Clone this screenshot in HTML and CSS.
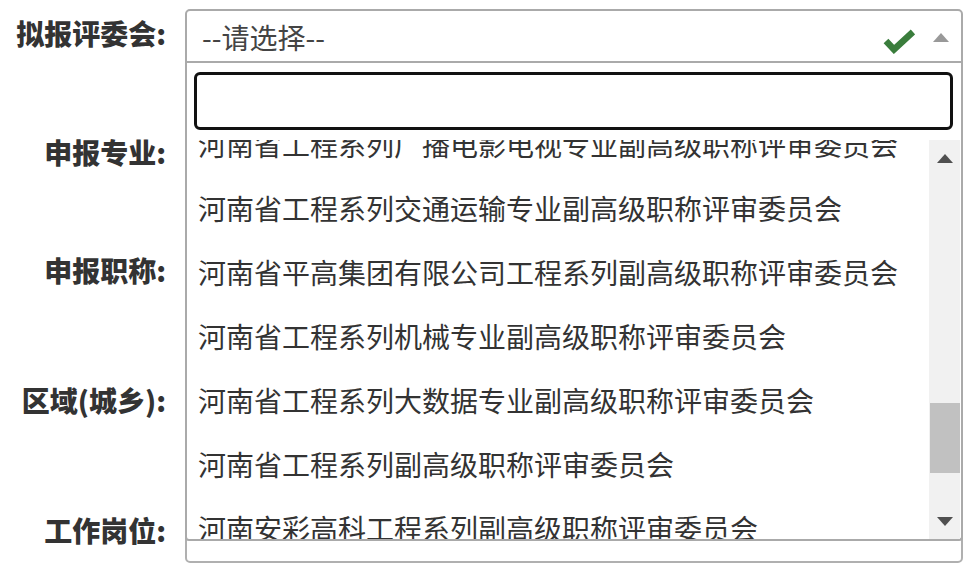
FILE: index.html
```html
<!DOCTYPE html>
<html lang="zh-CN">
<head>
<meta charset="utf-8">
<title>申报</title>
<link rel="stylesheet" href="styles.css">
</head>
<body>
<form class="form">
  <div class="row">
    <label class="label">拟报评委会:</label>
    <div class="field">
      <div class="select open">
        <span class="select-text">--请选择--</span>
        <svg class="check" width="32" height="26" viewBox="0 0 32 26"><polyline points="3,13 11,21.5 30,4" fill="none" stroke="#3a7d3c" stroke-width="6.5"/></svg>
        <span class="arrow-up"></span>
      </div>
      <div class="dropdown">
        <div class="search-wrap"><input class="search" type="text"></div>
        <div class="results-wrap">
          <div class="results">
            <ul class="results-list">
              <li class="item">河南省工程系列广播电影电视专业副高级职称评审委员会</li>
              <li class="item">河南省工程系列交通运输专业副高级职称评审委员会</li>
              <li class="item">河南省平高集团有限公司工程系列副高级职称评审委员会</li>
              <li class="item">河南省工程系列机械专业副高级职称评审委员会</li>
              <li class="item">河南省工程系列大数据专业副高级职称评审委员会</li>
              <li class="item">河南省工程系列副高级职称评审委员会</li>
              <li class="item">河南安彩高科工程系列副高级职称评审委员会</li>
            </ul>
          </div>
          <div class="scrollbar">
            <div class="sb-btn"><span class="sb-up"></span></div>
            <div class="sb-thumb"></div>
            <div class="sb-btn sb-btn-end"><span class="sb-down"></span></div>
          </div>
        </div>
      </div>
    </div>
  </div>
  <div class="row row-2">
    <label class="label">申报专业:</label>
    <div class="field"><div class="input"></div></div>
  </div>
  <div class="row row-3">
    <label class="label">申报职称:</label>
    <div class="field"><div class="input"></div></div>
  </div>
  <div class="row row-4">
    <label class="label">区域(城乡):</label>
    <div class="field"><div class="input"></div></div>
  </div>
  <div class="row row-5">
    <label class="label">工作岗位:</label>
    <div class="field"><div class="input"></div></div>
  </div>
</form>
</body>
</html>
```
FILE: styles.css
```css
* { box-sizing: border-box; }
html, body { margin: 0; padding: 0; background: #fff; overflow: hidden; }
body { font-family: "Noto Sans CJK SC", "Noto Sans", sans-serif; color: #333; }

.form { padding-top: 9px; margin: 0; }

.row { display: flex; align-items: center; height: 54px; }
.row-2 { margin-top: 65px; }
.row-3 { margin-top: 64px; }
.row-4 { margin-top: 76px; }
.row-5 { margin-top: 79px; }

.label {
  width: 166px;
  margin-right: 19px;
  padding-bottom: 6px;
  text-align: right;
  font-size: 28px;
  font-weight: 900;
  color: #333;
  white-space: nowrap;
}
.row-5 .label { padding-bottom: 12px; }

.field { position: relative; width: 778px; height: 54px; }

.input {
  height: 54px;
  border: 2px solid #b0b0b0;
  border-radius: 5px;
  background: #fff;
}

.select {
  height: 54px;
  border: 2px solid #aaa;
  border-radius: 5px 5px 0 0;
  background: #fff;
  display: flex;
  align-items: center;
  padding: 2px 12px 0 15px;
}
.select-text { flex: 1; font-size: 28px; color: #444; white-space: nowrap; }
.check { display: block; margin-top: 8px; margin-right: 18px; }
.arrow-up {
  width: 0; height: 0;
  border-left: 8px solid transparent;
  border-right: 8px solid transparent;
  border-bottom: 9px solid #999;
  margin-top: 1px;
}

.dropdown {
  position: absolute;
  left: 0;
  top: 54px;
  width: 778px;
  height: 478px;
  z-index: 10;
  background: #fff;
  border: 2px solid #aaa;
  border-top: none;
  border-radius: 0 0 4px 4px;
  display: flex;
  flex-direction: column;
}

.search-wrap { padding: 9px 8px 10px 7px; }
.search {
  display: block;
  width: 100%;
  height: 58px;
  border: 3px solid #111;
  border-radius: 6px;
  outline: none;
  background: #fff;
}

.results-wrap { flex: 1; display: flex; min-height: 0; }
.results { flex: 1; overflow: hidden; }
.results-list { list-style: none; margin: -28px 0 0; padding: 0; }
.item {
  height: 64px;
  display: flex;
  align-items: center;
  padding-left: 11px;
  font-size: 28px;
  color: #333;
  white-space: nowrap;
}

.scrollbar {
  width: 31px;
  margin-right: 1px;
  background: #f1f1f1;
  display: flex;
  flex-direction: column;
}
.sb-btn { height: 36px; display: flex; align-items: center; justify-content: center; }
.sb-btn-end { margin-top: auto; }
.sb-up {
  width: 0; height: 0;
  border-left: 8px solid transparent;
  border-right: 8px solid transparent;
  border-bottom: 9px solid #505050;
}
.sb-down {
  width: 0; height: 0;
  border-left: 8px solid transparent;
  border-right: 8px solid transparent;
  border-top: 9px solid #505050;
}
.sb-thumb { margin-top: 227px; margin-left: 1px; height: 70px; background: #c1c1c1; }
```
